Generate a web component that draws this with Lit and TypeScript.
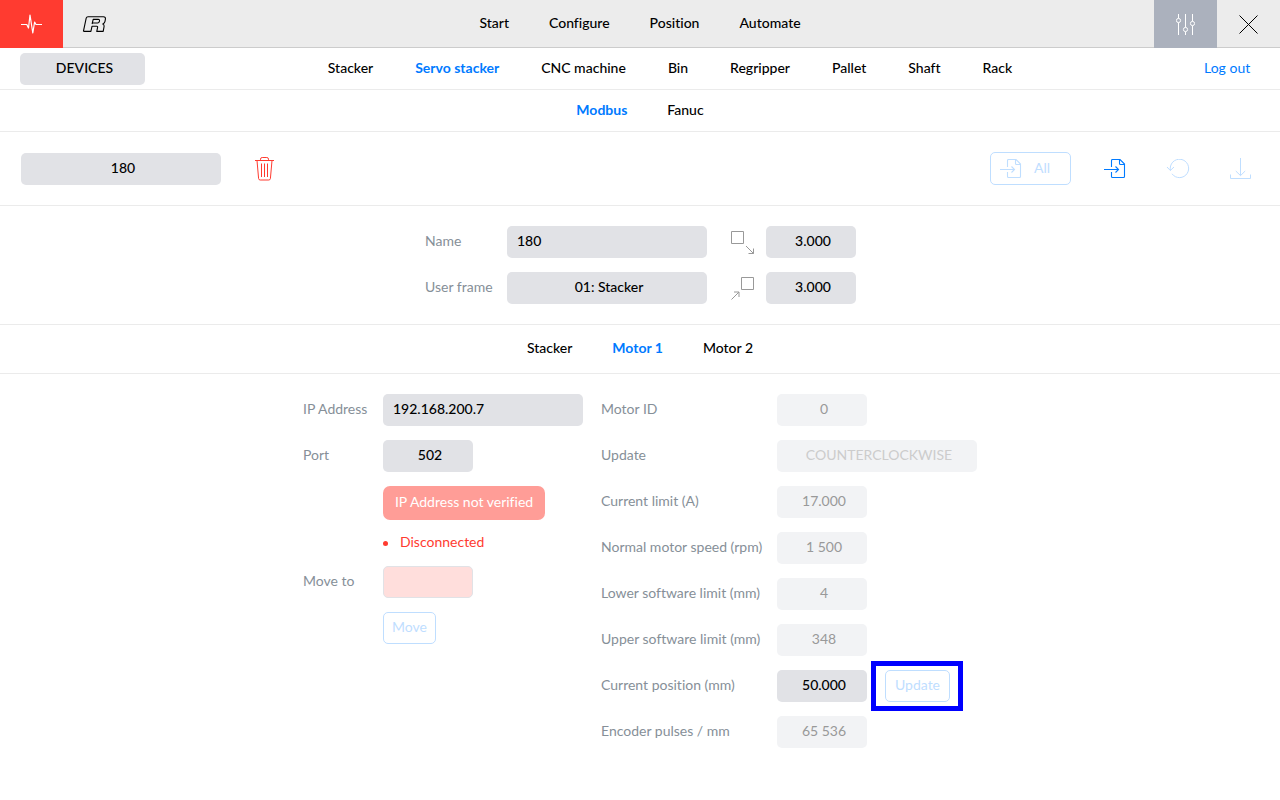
import { LitElement, html, css, svg, nothing } from "lit";
import { customElement } from "lit/decorators.js";
import { classMap } from "lit/directives/class-map.js";

const pulseIcon = html`<svg width="21" height="20" viewBox="0 0 21 20" aria-hidden="true">
  <path d="M0 10.5H5.8L7.5 14L9 1L11.8 19L13.6 8L15 10.5H21" fill="none" stroke="currentColor" stroke-width="1.2" stroke-linejoin="round" /></svg>`;

const logoIcon = html`<svg width="25" height="16" viewBox="0 0 25 16" aria-hidden="true">
  <path d="M1.4 15.4L4.2 2.2Q4.6.8 6 .8H21.4Q23.8.8 23.4 3.2L23 5.4Q22.7 7.3 20.8 8Q22.4 8.7 22.1 10.4L21.2 15.4H14.8L15.6 11.4Q15.8 10.3 14.8 10.3H10L8.9 15.4H1.4M10.1 8L11.2 3.4H16.3Q17.8 3.4 17.5 4.8L17.3 5.7Q17 7 15.6 7H10.4"
    fill="none" stroke="currentColor" stroke-width="1.1" stroke-linejoin="round" /></svg>`;

const slidersIcon = html`<svg width="19" height="21" viewBox="0 0 19 21" aria-hidden="true">
  <path d="M2.5 0V4.4M2.5 8.6V21M9.5 0V13.4M9.5 17.6V21M16.5 0V7.4M16.5 11.6V21" stroke="currentColor" fill="none" />
  <g fill="none" stroke="currentColor"><circle cx="2.5" cy="6.5" r="2.1" /><circle cx="9.5" cy="15.5" r="2.1" /><circle cx="16.5" cy="9.5" r="2.1" /></g></svg>`;

const closeIcon = html`<svg width="19" height="19" viewBox="0 0 19 19" aria-hidden="true">
  <path d="M.5.5L18.5 18.5M18.5.5L.5 18.5" stroke="currentColor" /></svg>`;

const trashIcon = html`<svg width="19" height="24" viewBox="0 0 19 24" aria-hidden="true">
  <path d="M0 3.5H19M5.5 3.5V2.2Q5.5.5 7.2.5H11.8Q13.5.5 13.5 2.2V3.5M2 3.5L3.6 21.6Q3.8 23 5.2 23H13.8Q15.2 23 15.4 21.6L17 3.5M6.5 6.5V20M9.5 6.5V20M12.5 6.5V20" fill="none" stroke="currentColor" /></svg>`;

const importIcon = html`<svg width="22" height="20" viewBox="0 0 22 20" aria-hidden="true">
  <path d="M7.5 8V1.5Q7.5.5 8.5.5H16L20.5 5V17.5Q20.5 18.5 19.5 18.5H8.5Q7.5 18.5 7.5 17.5V13M15.5.5V4.5Q15.5 5.5 16.5 5.5H20.5M0 10.5H14.5M11.5 7.5L14.5 10.5L11.5 13.5" fill="none" stroke="currentColor" stroke-width="1.1" /></svg>`;

const undoIcon = html`<svg width="24" height="20" viewBox="0 0 24 20" aria-hidden="true">
  <path d="M4.5 11.5A9.2 9.2 0 1 1 6 14.8M1 8L4.3 11.5L8 8" fill="none" stroke="currentColor" /></svg>`;

const downloadIcon = html`<svg width="21" height="22" viewBox="0 0 21 22" aria-hidden="true">
  <path d="M10.5 0V17.5M5.8 13L10.5 17.6L15.2 13M.5 16.5V20.5H20.5V16.5" fill="none" stroke="currentColor" /></svg>`;

const exitShape = svg`<path d="M.5 1.5H12.5V13.5H.5ZM15 16L22.5 23.5M17.5 23.5H22.5V18.5" />`;
const entryShape = svg`<path d="M10.5 1.5H22.5V13.5H10.5ZM.5 23.5L8 16M3 16H8V21" />`;
const offsetIcon = (shape: unknown) => html`<svg class="offset" width="24" height="24" viewBox="0 0 24 24" fill="none" stroke="currentColor" aria-hidden="true">${shape}</svg>`;

interface MotorField {
  id: string;
  label: string;
  value: string;
  editable?: boolean;
  choice?: boolean;
}

const motorFields: MotorField[] = [
  { id: "motor-id", label: "Motor ID", value: "0" },
  { id: "direction", label: "Update", value: "COUNTERCLOCKWISE", choice: true },
  { id: "current-limit", label: "Current limit (A)", value: "17.000" },
  { id: "speed", label: "Normal motor speed (rpm)", value: "1 500" },
  { id: "lower", label: "Lower software limit (mm)", value: "4" },
  { id: "upper", label: "Upper software limit (mm)", value: "348" },
  { id: "current-position", label: "Current position (mm)", value: "50.000", editable: true },
  { id: "pulses", label: "Encoder pulses / mm", value: "65 536" },
];

@customElement("app-root")
export class AppRoot extends LitElement {
  static styles = css`
    :host {
      display: block;
      min-height: 100vh;
      background: #fff;
      color: #000;
      font: 500 14px/18px Lato, "Open Sans", sans-serif;
      font-variant-ligatures: none;
    }
    * { box-sizing: border-box; }
    svg { display: block; flex: none; }
    button, input, select { font: inherit; color: inherit; margin: 0; }
    button { padding: 0; border: 0; background: none; }
    a { color: inherit; text-decoration: none; }

    .header { display: flex; height: 48px; background: #ececec; border-bottom: 1px solid #ccc; }
    .tile { display: flex; align-items: center; justify-content: center; width: 63px; height: 48px; }
    .status { background: #ff3b30; color: #fff; }
    .settings { background: #abb1bd; color: #fff; }

    .tabs { display: flex; flex: 1; align-items: center; justify-content: center; gap: 40px; padding-bottom: 1px; }
    .active { color: #007aff; font-weight: 700; }

    .row { display: flex; align-items: center; border-bottom: 1px solid #ebebeb; }
    .devices { height: 42px; }
    .devices .tabs { gap: 42px; }
    .brand { height: 42px; }
    .parts { height: 49px; padding-bottom: 1px; }
    .side-start { width: 145px; padding-left: 20px; }
    .side-end { width: 85px; padding-left: 9px; padding-bottom: 1px; color: #007aff; font-weight: 400; }

    .toolbar { height: 74px; padding: 0 8px 0 21px; }
    .tool { display: flex; align-items: center; justify-content: center; width: 63px; height: 48px; color: #007aff; }
    .tool:disabled, .outlined:disabled { color: #bfdeff; }
    .delete { margin-left: 12px; color: #ff3b30; }
    .spacer { flex: 1; }

    .outlined { height: 32px; padding: 0 8px 2px; border: 1px solid currentColor; border-radius: 5px; font-weight: 400; }
    .import-all { display: flex; align-items: center; gap: 12px; height: 33px; width: 81px; padding: 0 9px; margin-right: 12px; }
    .import-all span { padding-bottom: 2px; }
    .update { min-width: 65px; }

    .field {
      width: 90px; height: 32px; padding: 0 0 2px 4px; border: 0; border-radius: 5px;
      background: #e1e2e6; text-align: center; text-align-last: center; appearance: none;
    }
    input.field { padding-bottom: 3px; }
    .wide { width: 200px; }
    .full { width: 100%; }
    .field.text { padding-left: 10px; text-align: left; text-align-last: left; }
    .field:disabled { background: #f2f3f5; color: #999; opacity: 1; font-weight: 400; }
    select.field:disabled { color: #ccc; }
    .field.invalid { background: #ffdedc; border: 1px solid #e1e2e6; }

    label { color: #868f98; font-weight: 400; padding-bottom: 2px; }

    .general {
      display: grid; grid-template-columns: 82px 200px 59px 90px; row-gap: 14px;
      align-items: center; justify-content: center; padding: 20px 0 20px 1px;
      border-bottom: 1px solid #ebebeb;
    }
    .offset { color: #999; margin-left: 24px; }

    .motor { display: flex; justify-content: center; gap: 18px; padding: 20px 0; }
    .column { display: grid; row-gap: 14px; align-content: start; align-items: center; justify-items: start; }
    .connection { grid-template-columns: 80px 200px; }
    .limits { grid-template-columns: 176px 200px; }
    .second { grid-column: 2; }
    .verify { min-width: 162px; height: 34px; padding: 0 10px 2px; border-radius: 7px; background: #ff9d97; color: #fff; font-weight: 400; }
    .state { display: flex; align-items: center; gap: 12px; height: 18px; color: #ff3b30; font-weight: 400; }
    .state span { padding-bottom: 2px; }
    .dot { width: 5px; height: 5px; border-radius: 50%; background: currentColor; }
    .group { display: flex; align-items: center; gap: 18px; }
    .marked { position: relative; display: flex; }
    .marker { position: absolute; inset: -9px -13px -9px -14px; border: 5px solid #00f; pointer-events: none; }
  `;

  private tabs(items: string[], active?: string) {
    return html`<nav class="tabs">
      ${items.map((item) => html`<a href="#" class=${classMap({ active: item === active })}>${item}</a>`)}
    </nav>`;
  }

  private motorField(f: MotorField) {
    const control = f.choice
      ? html`<select id=${f.id} class="field wide" disabled><option>${f.value}</option></select>`
      : html`<input id=${f.id} class="field" .value=${f.value} ?disabled=${!f.editable} />`;
    return html`<label for=${f.id}>${f.label}</label>
      <div class="group">${control}${f.editable
        ? html`<div class="marked"><button class="outlined update" disabled>Update</button><div class="marker"></div></div>`
        : nothing}</div>`;
  }

  render() {
    return html`
      <header class="header">
        <button class="tile status" aria-label="Status">${pulseIcon}</button>
        <button class="tile" aria-label="Robot">${logoIcon}</button>
        ${this.tabs(["Start", "Configure", "Position", "Automate"])}
        <button class="tile settings" aria-label="Settings">${slidersIcon}</button>
        <button class="tile" aria-label="Close">${closeIcon}</button>
      </header>
      <div class="row devices">
        <div class="side-start"><select class="field full" aria-label="Section"><option>DEVICES</option></select></div>
        ${this.tabs(["Stacker", "Servo stacker", "CNC machine", "Bin", "Regripper", "Pallet", "Shaft", "Rack"], "Servo stacker")}
        <div class="side-end"><a href="#">Log out</a></div>
      </div>
      <div class="row brand">${this.tabs(["Modbus", "Fanuc"], "Modbus")}</div>
      <div class="row toolbar">
        <select class="field wide" aria-label="Device"><option>180</option></select>
        <button class="tool delete" aria-label="Delete">${trashIcon}</button>
        <div class="spacer"></div>
        <button class="outlined import-all" disabled>${importIcon}<span>All</span></button>
        <button class="tool" aria-label="Import">${importIcon}</button>
        <button class="tool" aria-label="Undo" disabled>${undoIcon}</button>
        <button class="tool" aria-label="Save" disabled>${downloadIcon}</button>
      </div>
      <section class="general">
        <label for="name">Name</label>
        <input id="name" class="field wide text" .value=${"180"} />
        ${offsetIcon(exitShape)}
        <input class="field" aria-label="Exit offset" .value=${"3.000"} />
        <label for="frame">User frame</label>
        <select id="frame" class="field wide"><option>01: Stacker</option></select>
        ${offsetIcon(entryShape)}
        <input class="field" aria-label="Entry offset" .value=${"3.000"} />
      </section>
      <div class="row parts">${this.tabs(["Stacker", "Motor 1", "Motor 2"], "Motor 1")}</div>
      <main class="motor">
        <section class="column connection">
          <label for="ip">IP Address</label>
          <input id="ip" class="field wide text" .value=${"192.168.200.7"} />
          <label for="port">Port</label>
          <input id="port" class="field" .value=${"502"} />
          <button class="verify second">IP Address not verified</button>
          <div class="state second"><div class="dot"></div><span>Disconnected</span></div>
          <label for="move">Move to</label>
          <input id="move" class="field invalid" />
          <button class="outlined second" disabled>Move</button>
        </section>
        <section class="column limits">${motorFields.map((f) => this.motorField(f))}</section>
      </main>
    `;
  }
}
